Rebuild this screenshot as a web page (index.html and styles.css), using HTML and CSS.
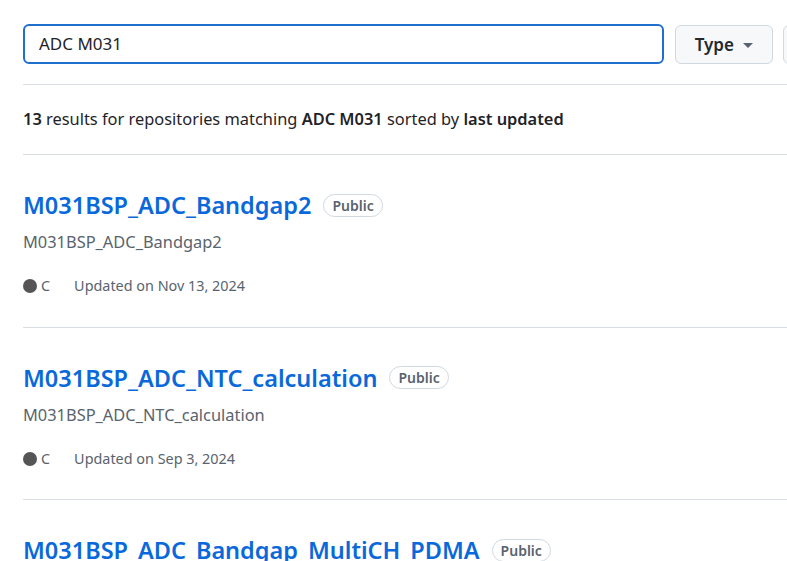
FILE: index.html
```html
<!DOCTYPE html>
<html>
<head>
<meta charset="utf-8">
<link rel="stylesheet" href="styles.css">
</head>
<body>
<div class="page">
  <div class="search-row">
    <div class="search-input">ADC M031</div>
    <div class="btn">Type <span class="caret"></span></div>
    <div class="btn btn-cut"></div>
  </div>
  <div class="rule"></div>
  <div class="summary"><b>13</b> results for repositories matching <b>ADC M031</b> sorted by <b>last updated</b></div>
  <ul class="repo-list">
    <li class="repo">
      <div class="repo-head"><a class="repo-name">M031BSP_ADC_Bandgap2</a><span class="badge">Public</span></div>
      <p class="repo-desc">M031BSP_ADC_Bandgap2</p>
      <div class="repo-meta"><span class="lang"><span class="dot"></span>C</span><span>Updated on Nov 13, 2024</span></div>
    </li>
    <li class="repo">
      <div class="repo-head"><a class="repo-name">M031BSP_ADC_NTC_calculation</a><span class="badge">Public</span></div>
      <p class="repo-desc">M031BSP_ADC_NTC_calculation</p>
      <div class="repo-meta"><span class="lang"><span class="dot"></span>C</span><span>Updated on Sep 3, 2024</span></div>
    </li>
    <li class="repo">
      <div class="repo-head"><a class="repo-name">M031BSP_ADC_Bandgap_MultiCH_PDMA</a><span class="badge">Public</span></div>
      <p class="repo-desc">M031BSP_ADC_Bandgap_MultiCH_PDMA</p>
      <div class="repo-meta"><span class="lang"><span class="dot"></span>C</span><span>Updated on Aug 1, 2024</span></div>
    </li>
  </ul>
</div>
</body>
</html>
```

FILE: styles.css
```css
html, body {
  margin: 0;
  padding: 0;
  background: #ffffff;
  overflow: hidden;
}
body {
  font-family: "Noto Sans", "Open Sans", sans-serif;
  color: #1f2328;
}
.page {
  width: 800px;
  padding: 24px 0 0 23px;
}
.search-row {
  display: flex;
  gap: 11px;
  align-items: center;
}
.search-input {
  box-sizing: border-box;
  width: 644px;
  height: 40px;
  border: 2px solid #1f6fd0;
  border-radius: 6px;
  padding: 0 14px;
  font-size: 17px;
  line-height: 36px;
  color: #1f2328;
}
.btn {
  box-sizing: border-box;
  width: 99px;
  height: 39px;
  background: #f6f8fa;
  border: 1px solid #d1d9e0;
  border-radius: 6px;
  display: flex;
  align-items: center;
  justify-content: center;
  gap: 9px;
  font-size: 17px;
  font-weight: 600;
  color: #25292e;
}
.btn-cut {
  width: 40px;
  flex: none;
  margin-left: -1px;
}
.caret {
  width: 0;
  height: 0;
  border-left: 5px solid transparent;
  border-right: 5px solid transparent;
  border-top: 5px solid #59636e;
  margin-top: 2px;
}
.rule {
  height: 1px;
  background: #d8dee4;
  margin-top: 20px;
}
.summary {
  font-size: 16.4px;
  line-height: 24px;
  margin: 22px 0 23px;
  color: #1f2328;
}
.summary b { font-weight: 600; }
.repo-list {
  list-style: none;
  margin: 0;
  padding: 0;
}
.repo {
  border-top: 1px solid #d8dee4;
  height: 172.5px;
  box-sizing: border-box;
  padding-top: 33px;
}
.repo-head {
  display: flex;
  align-items: center;
  gap: 12px;
  height: 34px;
}
.repo-name {
  color: #0969da;
  font-size: 23.5px;
  font-weight: 600;
  text-decoration: none;
  white-space: nowrap;
}
.badge {
  border: 1px solid #d1d9e0;
  border-radius: 12px;
  font-size: 14px;
  font-weight: 600;
  color: #59636e;
  padding: 0 8px;
  line-height: 21px;
}
.repo-desc {
  margin: 8px 0 0;
  font-size: 16.4px;
  line-height: 24px;
  color: #59636e;
}
.repo-meta {
  display: flex;
  align-items: center;
  gap: 24px;
  margin-top: 22px;
  font-size: 14.4px;
  line-height: 20px;
  color: #59636e;
}
.lang {
  display: flex;
  align-items: center;
  gap: 4px;
}
.dot {
  width: 14px;
  height: 14px;
  border-radius: 50%;
  background: #555555;
}
```
